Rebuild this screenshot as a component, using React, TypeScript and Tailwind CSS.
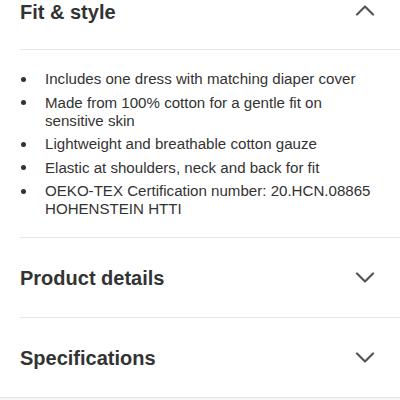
import React from 'react';

const fitItems = [
  'Includes one dress with matching diaper cover',
  'Made from 100% cotton for a gentle fit on sensitive skin',
  'Lightweight and breathable cotton gauze',
  'Elastic at shoulders, neck and back for fit',
  'OEKO-TEX Certification number: 20.HCN.08865 HOHENSTEIN HTTI',
];

const Chevron = ({ up = false }: { up?: boolean }) => (
  <svg width="20" height="12" viewBox="0 0 20 12" fill="none" className="text-[#555]">
    <path
      d={up ? 'M2 10.5L10 2.5L18 10.5' : 'M2 1.5L10 9.5L18 1.5'}
      stroke="currentColor"
      strokeWidth="2.2"
      strokeLinecap="round"
      strokeLinejoin="round"
    />
  </svg>
);

const CollapsedRow = ({ title }: { title: string }) => (
  <div className="ml-5 border-t border-[#e6e6e6]">
    <div className="flex h-[79px] items-center justify-between pr-[25px]">
      <h2 className="text-[20px] font-bold leading-6 text-[#333]">{title}</h2>
      <Chevron />
    </div>
  </div>
);

export default function App() {
  return (
    <div
      className="h-[400px] w-[400px] overflow-hidden bg-white"
      style={{ fontFamily: '"Liberation Sans", Arial, sans-serif' }}
    >
      <div className="ml-5">
        <div className="flex h-[49px] items-start justify-between pr-[25px]">
          <h2 className="text-[20px] font-bold leading-6 text-[#333]">Fit &amp; style</h2>
          <div className="pt-[4px]">
            <Chevron up />
          </div>
        </div>
      </div>
      <div className="ml-5 border-t border-[#e6e6e6] pt-[20px] pb-[19px]">
        <ul className="flex flex-col gap-[5.5px] pr-6">
          {fitItems.map((t) => (
            <li key={t} className="flex text-[15.1px] leading-[18px] text-[#333]">
              <span className="flex h-[18px] w-[25px] shrink-0 items-center pl-[1px]">
                <span className="h-[5px] w-[5px] rounded-full bg-[#333]" />
              </span>
              <span>{t}</span>
            </li>
          ))}
        </ul>
      </div>
      <CollapsedRow title="Product details" />
      <CollapsedRow title="Specifications" />
      <div className="h-[4px] border-t border-[#e6e6e6] bg-[#f7f7f7]" />
    </div>
  );
}
